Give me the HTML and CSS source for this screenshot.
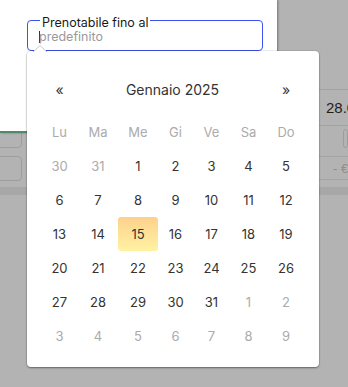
FILE: index.html
```html
<!DOCTYPE html>
<html lang="it">
<head>
<meta charset="utf-8">
<title>Prenotabile fino al</title>
<link rel="stylesheet" href="styles.css">
</head>
<body>
<div class="bg">
  <div class="bg-left">
    <div class="box box-a"></div>
    <div class="box box-b"></div>
  </div>
  <div class="bg-right">
    <div class="row row-1"><span class="val">28.0</span></div>
    <div class="row row-2"><div class="box box-c"></div></div>
    <div class="row row-3"><span class="muted">- €</span></div>
    <div class="row row-4"></div>
  </div>
</div>
<div class="band"></div>

<div class="dialog">
  <fieldset class="field">
    <legend class="label">Prenotabile fino al</legend>
    <div class="input"><span class="caret"></span><span class="ph">predefinito</span></div>
  </fieldset>
</div>

<div class="picker">
  <svg class="arrow" width="14" height="7" viewBox="0 0 14 7"><path d="M0 7 L7 0.5 L14 7" fill="#fff" stroke="#c9c9c9" stroke-width="1"/></svg>
  <div class="nav">
    <span class="prev">«</span>
    <span class="title">Gennaio 2025</span>
    <span class="next">»</span>
  </div>
  <div class="cal">
    <span class="wd">Lu</span><span class="wd">Ma</span><span class="wd">Me</span><span class="wd">Gi</span><span class="wd">Ve</span><span class="wd">Sa</span><span class="wd">Do</span>
    <span class="d off">30</span><span class="d off">31</span><span class="d">1</span><span class="d">2</span><span class="d">3</span><span class="d">4</span><span class="d">5</span>
    <span class="d">6</span><span class="d">7</span><span class="d">8</span><span class="d">9</span><span class="d">10</span><span class="d">11</span><span class="d">12</span>
    <span class="d">13</span><span class="d">14</span><span class="d today">15</span><span class="d">16</span><span class="d">17</span><span class="d">18</span><span class="d">19</span>
    <span class="d">20</span><span class="d">21</span><span class="d">22</span><span class="d">23</span><span class="d">24</span><span class="d">25</span><span class="d">26</span>
    <span class="d">27</span><span class="d">28</span><span class="d">29</span><span class="d">30</span><span class="d">31</span><span class="d off">1</span><span class="d off">2</span>
    <span class="d off">3</span><span class="d off">4</span><span class="d off">5</span><span class="d off">6</span><span class="d off">7</span><span class="d off">8</span><span class="d off">9</span>
  </div>
</div>
</body>
</html>
```
FILE: styles.css
```css
html, body {
  margin: 0;
  padding: 0;
}
body {
  width: 348px;
  height: 387px;
  overflow: hidden;
  position: relative;
  background: #b3b3b3;
  font-family: Inter, "Noto Sans", sans-serif;
}

/* background content under overlay */
.bg {
  display: flex;
  justify-content: space-between;
  height: 187px;
}
.bg-left {
  width: 22px;
  padding-top: 129px;
  display: flex;
  flex-direction: column;
  gap: 8px;
}
.box {
  box-sizing: border-box;
  border: 1px solid #9d9d9d;
  border-radius: 4px;
  background: #b3b3b3;
}
.box-a {
  height: 19px;
  margin-left: -12px;
}
.box-b {
  height: 25px;
  margin-left: -12px;
}
.bg-right {
  width: 69px;
  padding-top: 89px;
}
.row {
  box-sizing: border-box;
  border-top: 1px solid #a3a3a3;
  display: flex;
  align-items: center;
}
.row-1 {
  height: 36px;
  padding-left: 47px;
}
.row-2 {
  height: 31px;
  padding-left: 64px;
  align-items: flex-start;
  padding-top: 3px;
}
.box-c {
  width: 20px;
  height: 19px;
}
.row-3 {
  height: 23px;
  padding-left: 54px;
}
.row-4 {
  height: 1px;
}
.val {
  font-family: "Liberation Sans", Arial, sans-serif;
  font-size: 15px;
  color: #1e1e1e;
  white-space: nowrap;
}
.muted {
  font-family: "Liberation Sans", Arial, sans-serif;
  font-size: 13px;
  color: #8f8f8f;
  white-space: nowrap;
}
.band {
  height: 8px;
  background: #a7a7a7;
}

/* dialog */
.dialog {
  position: absolute;
  left: 0;
  top: 0;
  width: 277px;
  height: 121px;
  background: #fff;
  border-bottom: 2px solid #55876b;
  box-shadow: 1px 0 2px rgba(0, 0, 0, 0.35);
  padding-top: 10px;
  box-sizing: content-box;
}
.field {
  margin: 0 0 0 27px;
  width: 236px;
  box-sizing: border-box;
  border: 1px solid #3f51f2;
  border-radius: 4px;
  padding: 0 10px 6px 12px;
  min-width: 0;
}
.label {
  padding: 6px 2px 0 2px;
  font-size: 12.5px;
  line-height: 14px;
  color: #1a1a1a;
}
.input {
  display: flex;
  align-items: center;
  margin-left: -1px;
  height: 14px;
  font-size: 12.5px;
  line-height: 14px;
}
.caret {
  width: 1px;
  height: 12px;
  background: #333;
  margin-right: -1px;
}
.ph {
  color: #9a9a9a;
}

/* date picker */
.picker {
  position: absolute;
  left: 27px;
  top: 51px;
  width: 292px;
  height: 316px;
  box-sizing: border-box;
  background: #fff;
  border-radius: 4px;
  box-shadow: 0 0 0 1px rgba(0, 0, 0, 0.06), 0 1px 2px rgba(0, 0, 0, 0.4);
  padding: 20px 0 0 14px;
}
.arrow {
  position: absolute;
  left: 6px;
  top: -6px;
  display: block;
}
.nav, .cal {
  display: grid;
  grid-template-columns: 37px 40px 40px 35px 37px 37px 38px;
}
.nav {
  height: 36px;
  align-items: center;
  margin-bottom: 8px;
  color: #333;
}
.prev, .next {
  text-align: center;
  font-size: 14px;
}
.title {
  grid-column: 2 / 7;
  text-align: center;
  font-size: 14px;
}
.cal {
  grid-auto-rows: 34px;
}
.wd, .d {
  display: flex;
  align-items: center;
  justify-content: center;
  font-size: 13px;
}
.wd {
  color: #ababab;
}
.d {
  color: #333;
}
.d.off {
  color: #ababab;
}
.d.today {
  background: linear-gradient(to bottom, #fdd18c, #fff2a3);
  border-radius: 3px;
}
```
